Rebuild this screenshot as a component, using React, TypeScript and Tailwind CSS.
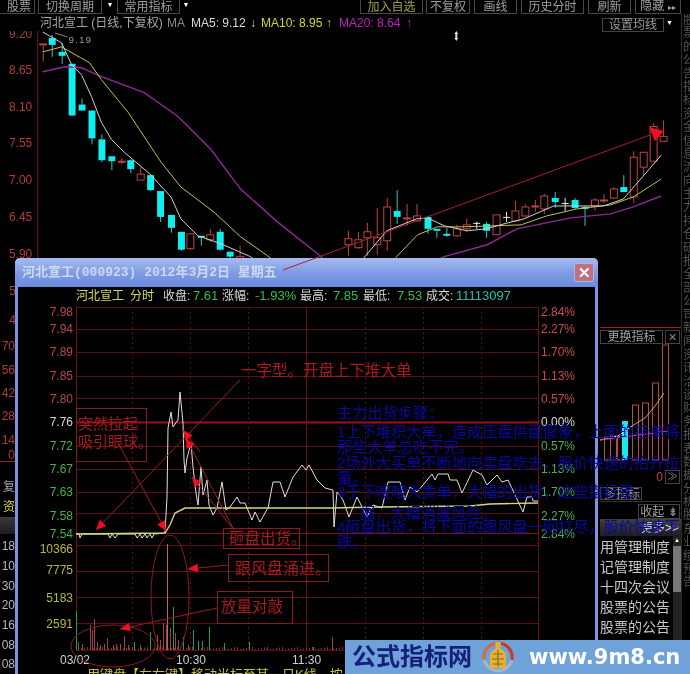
import React from "react";

type Kind = "up" | "down" | "white";
type Candle = [number, number, number, number, number, Kind];

const candles: Candle[] = [
  [41, 44, 45, 44, 62, "up"], [50, 38, 45, 35, 57, "down"], [60, 52, 56, 43, 64, "down"],
  [70, 64, 116, 64, 116, "down"], [80, 105, 111, 99, 111, "down"], [90, 111, 139, 111, 145, "down"],
  [100, 140, 161, 135, 163, "down"], [110, 157, 162, 157, 171, "down"], [120, 162, 163, 159, 165, "up"],
  [129, 161, 170, 160, 174, "down"], [139, 175, 181, 168, 181, "up"], [149, 176, 191, 175, 192, "down"],
  [159, 192, 218, 192, 223, "down"], [170, 216, 229, 216, 234, "down"], [180, 233, 251, 233, 252, "down"],
  [189, 235, 250, 235, 251, "up"], [200, 237, 239, 237, 247, "down"], [209, 236, 241, 230, 243, "up"],
  [219, 233, 251, 230, 252, "down"], [229, 253, 258, 253, 262, "down"], [239, 258, 262, 247, 268, "up"],
  [348, 240, 246, 232, 257, "up"], [358, 241, 249, 233, 250, "up"], [367, 233, 239, 224, 257, "up"],
  [377, 239, 246, 209, 256, "up"], [387, 208, 242, 199, 252, "up"], [397, 212, 218, 191, 225, "down"],
  [407, 219, 220, 205, 227, "up"], [417, 217, 222, 205, 223, "up"], [428, 218, 230, 217, 235, "down"],
  [437, 230, 232, 230, 239, "down"], [447, 235, 237, 229, 238, "down"], [457, 230, 237, 226, 238, "up"],
  [467, 226, 230, 220, 233, "up"], [477, 224, 225, 223, 230, "white"], [487, 225, 232, 223, 239, "down"],
  [497, 216, 236, 216, 236, "up"], [507, 218, 219, 213, 223, "white"], [516, 212, 222, 202, 223, "up"],
  [526, 208, 217, 205, 218, "up"], [536, 207, 208, 201, 213, "up"], [545, 197, 210, 195, 215, "up"],
  [556, 199, 203, 193, 209, "down"], [566, 204, 205, 199, 212, "white"], [576, 201, 209, 199, 210, "down"],
  [586, 208, 210, 207, 227, "down"], [596, 201, 207, 199, 212, "up"], [605, 201, 202, 195, 204, "up"],
  [615, 190, 199, 188, 200, "up"], [625, 188, 193, 176, 193, "down"], [635, 158, 198, 152, 204, "up"],
  [645, 153, 168, 153, 176, "up"], [655, 127, 162, 124, 162, "up"], [665, 137, 142, 121, 142, "up"],
];

const ma5 = "41,32 60,43 70,65 80,75 90,97 100,123 110,140 123,153 149,175 170,198 180,220 197,237 220,245 250,258 280,285 340,290 365,258 387,232 417,220 428,219 445,227 468,232 487,230 505,225 525,220 555,207 578,207 605,207 625,200 645,177 663,156";
const ma10 = "41,52 60,47 88,63 100,80 127,113 160,163 180,188 213,213 240,238 267,257 320,300 370,300 397,258 418,236 438,228 462,228 495,227 522,226 548,217 578,210 612,206 635,198 663,180";
const ma20 = "41,72 63,67 80,68 100,77 143,93 177,117 210,150 240,190 277,223 320,257 360,300 420,270 445,258 488,246 518,230 572,219 612,215 635,208 663,197";

const priceLine =
  "76,534 79,534 80,538 82,534 108,534 110,538 112,534 115,538 118,534 135,534 137,538 140,534 142,538 145,534 147,538 150,534 152,538 154,534 165,533 167,497 168,428 171,412 173,427 178,420 180,392 183,423 184,460 185,473 187,458 191,443 193,467 196,493 198,505 201,467 203,495 207,480 209,505 213,515 217,508 222,482 226,510 230,507 237,497 240,503 245,503 252,520 255,512 260,522 265,513 268,508 273,482 280,482 285,497 293,477 302,465 306,470 309,465 317,480 325,488 333,490 334,527 337,492 343,500 349,517 357,497 367,517 373,505 382,508 388,482 400,482 405,500 410,487 417,492 423,485 432,474 435,480 438,474 448,474 450,480 457,480 462,493 473,470 482,475 487,485 497,475 502,482 508,480 523,512 527,497 532,497 533,501 538,501";
const avgLine = "76,534 165,533 170,525 175,513 185,508 200,508 330,508 380,507 470,506 490,504 538,503";

const gridRows = [307, 329, 352, 376, 398, 446, 469, 492, 513, 545, 571, 597, 623];

const priceLabels: [string, number, string][] = [
  ["7.98", 312, "#b84848"], ["7.94", 329, "#b84848"], ["7.89", 352, "#b84848"], ["7.85", 376, "#b84848"],
  ["7.80", 399, "#b84848"], ["7.76", 422, "#d8d8d8"], ["7.72", 446, "#48b048"], ["7.67", 469, "#48b048"],
  ["7.63", 492, "#48b048"], ["7.58", 516, "#48b048"], ["7.54", 534, "#48b048"],
];
const pctLabels: [string, number, string][] = [
  ["2.84%", 312, "#c84c4c"], ["2.27%", 329, "#c84c4c"], ["1.70%", 352, "#c84c4c"], ["1.13%", 376, "#c84c4c"],
  ["0.57%", 399, "#c84c4c"], ["0.00%", 422, "#d8d8d8"], ["0.57%", 446, "#48b048"], ["1.13%", 469, "#48b048"],
  ["1.70%", 492, "#48b048"], ["2.27%", 516, "#48b048"], ["2.84%", 534, "#48b048"],
];
const volLabels: [string, number][] = [["10366", 549], ["7775", 570], ["5183", 598], ["2591", 624]];

const greenBars: [number, number][] = [
  [76, 611], [134, 642], [150, 632], [173, 607], [183, 637], [193, 630], [198, 641], [202, 641], [209, 627], [224, 643], [249, 642], [313, 647],
];
const redBars: [number, number][] = [
  [78, 642], [82, 644], [90, 625], [92, 630], [94, 619], [97, 642], [100, 645], [104, 644], [107, 638], [113, 645], [116, 644], [120, 644], [124, 636], [128, 645], [140, 645], [157, 635], [160, 640], [163, 623], [166, 625], [170, 628], [175, 633], [178, 640], [188, 645], [332, 637],
];
const lowBars = Array.from({ length: 150 }, (_, i) => 78 + i * 3);

const strip = "股票的公告指标资金信息流向主力持仓研报全部公司新闻资讯洽谈财务报表数据分析股东业绩预告".split("");

const leftLabels = ["70", "56", "42", "28", "14"];
const leftTimes = ["18", "10", "30", "20", "16", "08", "08"];
const news = ["用管理制度", "记管理制度", "十四次会议", "股票的公告", "股票的公告", "股票的公告"];

function Arrow({ x1, y1, x2, y2 }: { x1: number; y1: number; x2: number; y2: number }) {
  const a = Math.atan2(y2 - y1, x2 - x1);
  const len = 10;
  const w = 4.5;
  const bx = x2 - Math.cos(a) * len;
  const by = y2 - Math.sin(a) * len;
  const pts = `${x2},${y2} ${bx - Math.sin(a) * w},${by + Math.cos(a) * w} ${bx + Math.sin(a) * w},${by - Math.cos(a) * w}`;
  return (
    <g>
      <line x1={x1} y1={y1} x2={x2} y2={y2} stroke="#a01c20" strokeWidth="1" />
      <polygon points={pts} fill="#ee1020" />
    </g>
  );
}

function ToolButton({ label, className }: { label: React.ReactNode; className: string }) {
  return (
    <div className={`flex h-[14px] shrink-0 items-center justify-center border-x border-b border-[#484848] text-[12px] leading-[12px] ${className}`}>
      {label}
    </div>
  );
}

function MainChart() {
  return (
    <svg viewBox="0 31 681 298" className="block h-[298px] w-[681px]">
      <line x1="36" y1="31" x2="36" y2="329" stroke="#7a1a1a" />
      {[["9.20", 38], ["8.65", 74], ["8.10", 111], ["7.55", 148], ["7.00", 185], ["6.45", 222], ["5.90", 259]].map(([t, y]) => (
        <text key={t} x="7" y={y} fontSize="12" fill="#b03c3c">{t}</text>
      ))}
      <text x="14" y="297" fontSize="12" textAnchor="end" fill="#b03c3c">5</text>
      <text x="14" y="326" fontSize="12" textAnchor="end" fill="#b03c3c">4</text>
      <line x1="0" y1="329.5" x2="15" y2="329.5" stroke="#a01c20" />
      {candles.map(([x, top, bottom, wTop, wBottom, kind], i) => {
        const color = kind === "down" ? "#10eeee" : kind === "white" ? "#e8e8e8" : "#c04444";
        return (
          <g key={i}>
            <line x1={x + 0.5} y1={wTop} x2={x + 0.5} y2={wBottom} stroke={kind === "down" ? "#2fc8c8" : color} />
            <rect
              x={x - 3}
              y={top}
              width="7"
              height={Math.max(bottom - top, 1)}
              fill={kind === "up" ? "#000" : color}
              stroke={kind === "up" ? color : "none"}
            />
          </g>
        );
      })}
      <polyline points={ma20} fill="none" stroke="#8e2a96" strokeWidth="1.4" />
      <polyline points={ma10} fill="none" stroke="#c8c050" strokeWidth="1" />
      <polyline points={ma5} fill="none" stroke="#d0d0d0" strokeWidth="1" />
      <line x1="53" y1="33" x2="66" y2="37" stroke="#888" />
      <text x="67" y="43" fontSize="10" letterSpacing="1" fill="#999">9.19</text>
      <path d="M457 31 l2 3 h-4 z M457 41 l2 -3 h-4 z M456 34 h2 v4 h-2 z" fill="#ddd" />
    </svg>
  );
}

function IndicatorChart() {
  const bars: [number, number][] = [[607, 439], [613, 438], [620, 438], [635, 407], [645, 405], [655, 385], [665, 347]];
  return (
    <svg viewBox="600 346 81 117" className="block h-[117px] w-[81px]">
      {bars.map(([x, y]) => (
        <rect key={x} x={x - 2.5} y={y} width="6" height={462 - y} fill="none" stroke="#b84a44" />
      ))}
      <rect x="622" y="423" width="6" height="39" fill="#18e8f0" />
      <polyline points="600,442 618,438 632,428" fill="none" stroke="#e8d8d0" />
      <polyline points="632,428 645,420 655,408 664,395" fill="none" stroke="#d8a030" />
      <polyline points="600,442 630,438 668,433" fill="none" stroke="#c83ca0" />
    </svg>
  );
}

function IntradayChart() {
  return (
    <svg viewBox="18 305 577 369" className="block h-[369px] w-[577px]">
      {gridRows.map((y) => (
        <line key={y} x1="76" y1={y + 0.5} x2="538" y2={y + 0.5} stroke="#5c0f14" />
      ))}
      <line x1="76" y1="422.5" x2="538" y2="422.5" stroke="#a01018" strokeWidth="2" />
      <line x1="76" y1="533.5" x2="538" y2="533.5" stroke="#7a1418" />
      {[132, 190, 248, 365, 423, 481].map((x) => (
        <line key={x} x1={x + 0.5} y1="307" x2={x + 0.5} y2="650" stroke="#5c0f14" strokeDasharray="2 3" />
      ))}
      {[76, 306, 538].map((x) => (
        <line key={x} x1={x + 0.5} y1="307" x2={x + 0.5} y2="650" stroke="#6a1116" />
      ))}

      {priceLabels.map(([t, y, c]) => (
        <text key={t} x="73" y={y + 4} fontSize="12" textAnchor="end" fill={c}>{t}</text>
      ))}
      {pctLabels.map(([t, y, c], i) => (
        <text key={i} x="541" y={y + 4} fontSize="12" fill={c}>{t}</text>
      ))}
      {volLabels.map(([t, y]) => (
        <text key={t} x="73" y={y + 4} fontSize="12" textAnchor="end" fill="#b8b840">{t}</text>
      ))}

      {lowBars.map((x) => (
        <line key={x} x1={x + 0.5} y1={650 - (1 + ((x * 7) % 5) * 0.5)} x2={x + 0.5} y2="650" stroke="#8a2a2a" />
      ))}
      {redBars.map(([x, y]) => (
        <line key={x} x1={x + 0.5} y1={y} x2={x + 0.5} y2="650" stroke="#a04040" />
      ))}
      {greenBars.map(([x, y]) => (
        <line key={x} x1={x + 0.5} y1={y} x2={x + 0.5} y2="650" stroke="#20a040" />
      ))}
      <line x1="167.5" y1="544" x2="167.5" y2="650" stroke="#b06868" />
      <line x1="76" y1="650.5" x2="538" y2="650.5" stroke="#5c0f14" />

      <polyline points={priceLine} fill="none" stroke="#e0e0e0" />
      <polyline points={avgLine} fill="none" stroke="#d8d480" strokeWidth="1.4" />

      <text x="60" y="664" fontSize="12" fill="#d0d0d0">03/02</text>
      <text x="176" y="664" fontSize="12" fill="#d0d0d0">10:30</text>
      <text x="292" y="664" fontSize="12" fill="#d0d0d0">11:30</text>
      <text x="87" y="679" fontSize="13" fill="#c8c040">用键盘【左右键】移动光标至某一日K线，按</text>

      <g fill="none" stroke="#8e1a1e">
        <rect x="76.5" y="408.5" width="70" height="53" />
        <rect x="223.5" y="528.5" width="76" height="20" />
        <rect x="228.5" y="554.5" width="100" height="27" />
        <rect x="217.5" y="591.5" width="75" height="32" />
        <ellipse cx="170" cy="597" rx="19" ry="62" />
        <ellipse cx="113" cy="646" rx="42" ry="21" />
      </g>
      <Arrow x1={240} y1={380} x2={96} y2={530} />
      <Arrow x1={118} y1={443} x2={166} y2={531} />
      <Arrow x1={200} y1={452} x2={183} y2={430} />
      <Arrow x1={234} y1={530} x2={192} y2={477} />
      <Arrow x1={234} y1={530} x2={186} y2={438} />
      <Arrow x1={228} y1={565} x2={188} y2={569} />
      <Arrow x1={217} y1={608} x2={120} y2={629} />

      <g fill="#a81a1c" fontSize="15">
        <text x="241" y="376" fontSize="15.5">一字型。开盘上下堆大单</text>
        <text x="78" y="429">突然拉起</text>
        <text x="78" y="447">吸引眼球。</text>
        <text x="229" y="544" fontSize="15.5">砸盘出货。</text>
        <text x="235" y="574" fontSize="16">跟风盘涌进。</text>
        <text x="221" y="612" fontSize="15.5">放量对敲</text>
      </g>
    </svg>
  );
}

function Overlay() {
  const lines: [string, number, number][] = [
    ["主力出货步骤：", 337, 418],
    ["1上下堆积大单，造成压盘供盘假象，上面的挂单将", 337, 437],
    ["那些大单总吃不完。", 337, 452],
    ["2场外大买单不断地向卖盘吃去，股价快速的抬升拉", 337, 468],
    ["量。", 337, 483],
    ["3于下嗖嗖大卖单，大幅的出货，这些指标是", 337, 497],
    ["据，大幅消减风险。", 360, 518],
    ["4砸盘出货，将下面的跟风盘一网打尽，股价快速下", 337, 532],
    ["跌。", 337, 547],
  ];
  return (
    <svg viewBox="0 0 690 674" className="pointer-events-none absolute inset-0 h-[674px] w-[690px]">
      <line x1="283" y1="270" x2="650" y2="135" stroke="#a82030" />
      <polygon points="664,131 649,127 655,141" fill="#ee1020" />
      {lines.map(([t, x, y], i) => (
        <text key={i} x={x} y={y} fontSize="15.2" fill="#0808a4">{t}</text>
      ))}
    </svg>
  );
}

function Logo() {
  return (
    <svg viewBox="0 0 36 34" className="h-[34px] w-[36px] shrink-0">
      <path d="M4 20 A14.5 14.5 0 0 1 18 3" fill="none" stroke="#d06a48" strokeWidth="3" />
      <path d="M18 3 A14.5 14.5 0 0 1 32 20" fill="none" stroke="#c23c2a" strokeWidth="3" />
      <path d="M4 20 A14.5 14.5 0 0 0 32 20" fill="none" stroke="#a8b4c4" strokeWidth="3" />
      <path d="M15 2 h6 l-1 6 l6 5 v15 h-16 v-15 l6 -5 z" fill="#e2b236" />
      <path d="M13 14 h10 M12 19 h12 M13 24 h10 M18 10 v17" stroke="#8a6a18" strokeWidth="1.2" />
    </svg>
  );
}

export default function App() {
  return (
    <div className="relative flex h-[674px] w-[690px] overflow-hidden bg-black font-['Liberation_Sans','Noto_Sans_CJK_SC',sans-serif] blur-[0.4px]">
      <div className="flex w-[681px] shrink-0 flex-col">
        {/* top toolbar */}
        <div className="flex h-[14px] text-[#a0a0a0]">
          <ToolButton label="股票" className="w-[35px] justify-end border-l-0 pr-[3px]" />
          <ToolButton label="切换周期" className="ml-[3px] w-[64px]" />
          <span className="ml-[3px] mt-[1px] w-[10px] text-center text-[7px] leading-[8px] text-white">▼</span>
          <ToolButton label="常用指标" className="ml-[2px] w-[63px]" />
          <span className="ml-[1px] mt-[1px] w-[10px] text-center text-[7px] leading-[8px] text-white">▼</span>
          <ToolButton label="加入自选" className="ml-[169px] w-[63px] text-[#a8a040]" />
          <ToolButton label="不复权" className="ml-[3px] w-[44px]" />
          <ToolButton label="画线" className="ml-[4px] w-[43px]" />
          <ToolButton label="历史分时" className="ml-[4px] w-[63px]" />
          <ToolButton label="刷新" className="ml-[4px] w-[43px]" />
          <ToolButton
            label={<span>隐藏 <span className="text-[8px]">▸▸</span></span>}
            className="ml-[4px] w-[46px]"
          />
        </div>

        {/* title row of the day chart */}
        <div className="flex h-[17px] items-center whitespace-nowrap pl-[40px] text-[12px] leading-[14px]">
          <span className="w-[127px] text-[#a8a8a8]">河北宣工 (日线,下复权)</span>
          <span className="w-[24px] text-[#888]">MA</span>
          <span className="w-[59px] text-[#d8d8d8]">MA5: 9.12</span>
          <span className="w-[11px] text-[#d8d8d8]">↓</span>
          <span className="w-[65px] text-[#d8d820]">MA10: 8.95</span>
          <span className="w-[13px] text-[#d8d820]">↑</span>
          <span className="w-[67px] text-[#c020c0]">MA20: 8.64</span>
          <span className="w-[196px] text-[#c020c0]">↑</span>
          <div className="mt-[4px] flex h-[14px] w-[62px] shrink-0 items-center justify-center border border-[#444] text-[#9a9a9a]">设置均线</div>
          <span className="ml-[2px] text-[7px] text-white">▼</span>
        </div>

        <MainChart />

        <div className="flex flex-1 justify-between">
          {/* left edge of the panel behind the dialog */}
          <div className="flex w-[15px] flex-col items-end overflow-hidden text-[12px] text-[#b03c3c]">
            <div className="mt-[8px] flex flex-col items-end">
              {leftLabels.map((t) => (
                <span key={t} className="h-[23.4px] shrink-0 leading-[23px]">{t}</span>
              ))}
              <span className="-mt-[3px] shrink-0 leading-[12px]">0</span>
            </div>
            <div className="h-px w-full shrink-0 bg-[#a01c20]" />
            <div className="mt-[18px] whitespace-nowrap leading-[14px] text-[#a0a0a0]">复</div>
            <div className="mt-[6px] whitespace-nowrap leading-[14px] text-[#d8d840]">资</div>
            <div className="mt-[3px] h-[17px] w-full shrink-0 bg-gradient-to-b from-[#3a3a3a] to-[#1c1c1c]" />
            <div className="mt-[2px] flex flex-col items-end text-[#b8b8b8]">
              {leftTimes.map((t, i) => (
                <span key={i} className="h-[19.7px] shrink-0 leading-[20px]">{t}</span>
              ))}
            </div>
          </div>

          {/* right panel */}
          <div className="flex w-[81px] flex-col overflow-hidden">
            <div className="h-px w-full bg-[#a01c20]" />
            <div className="mt-[2px] flex h-[14px] gap-[2px] text-[12px] text-[#a0a0a0]">
              <div className="flex w-[63px] items-center justify-center border border-[#444]">更换指标</div>
              <div className="flex w-[15px] items-center justify-center border border-[#444] text-[11px] text-[#888]">✕</div>
            </div>
            <IndicatorChart />
            <div className="mt-[8px] flex h-[15px] items-center justify-end text-[12px]">
              <span className="mr-[2px] text-[#c84030]">0</span>
              <span className="mr-[1px] flex h-[14px] w-[15px] items-center justify-center border border-[#444] text-[10px] text-[#888]">≫</span>
            </div>
            <div className="mt-[3px] flex h-[13px] w-[42px] items-center justify-end border border-[#444] pr-[1px] text-[12px] text-[#a0a0a0]">多指标</div>
            <div className="mt-[1px] h-px w-full bg-[#333]" />
            <div className="mt-[2px] flex justify-end">
              <div className="mr-[1px] flex h-[15px] w-[42px] items-center justify-center border border-[#444] text-[12px] text-[#a0a0a0]">收起 ⇟</div>
            </div>
            <div className="flex h-[17px] items-center justify-end bg-gradient-to-b from-[#404040] to-[#1e1e1e] pr-[2px] text-[12px] text-[#d8d8e8]">更多&gt;&gt;</div>
            <div className="flex flex-1">
              <div className="flex w-[73px] flex-col overflow-hidden whitespace-nowrap pt-[1px] text-[14px] text-[#c8c8c8]">
                {news.map((t, i) => (
                  <span key={i} className="h-[20px] leading-[20px]">{t}</span>
                ))}
              </div>
              <div className="flex w-[8px] flex-col bg-[#222]">
                <span className="h-[8px] text-center text-[6px] leading-[8px] text-white">▲</span>
                <div className="mt-[2px] h-[46px] bg-[#777]" />
              </div>
            </div>
          </div>
        </div>
      </div>

      {/* right edge of the window, mostly cut off */}
      <div className="mt-[14px] flex w-[9px] flex-col overflow-hidden border-l border-[#2c2c2c] pl-[1px] text-[12px] leading-[13px] text-[#555]">
        {strip.map((c, i) => (
          <span key={i} className="h-[13.4px] shrink-0">{c}</span>
        ))}
      </div>

      {/* dialog */}
      <div className="absolute left-[15px] top-[258px] flex h-[420px] w-[583px] flex-col rounded-t-[5px] bg-[#7d93e0] px-[3px]">
        <div className="-mx-[3px] flex h-[29px] shrink-0 items-center justify-between rounded-t-[5px] bg-gradient-to-b from-[#a6bcf0] via-[#7f9ce4] to-[#6a8ade] pl-[7px] pr-[4px]">
          <span className="whitespace-pre font-['Liberation_Mono','Noto_Sans_CJK_SC',monospace] text-[13px] font-bold text-[#cfd8ee]">河北宣工(000923) 2012年3月2日 星期五</span>
          <span className="flex h-[19px] w-[20px] items-center justify-center rounded-[2px] border border-[#a8b8e0] bg-[#c0707e] text-[15px] font-bold leading-none text-white">✕</span>
        </div>
        <div className="flex-1 bg-black">
          <div className="flex h-[18px] items-center whitespace-nowrap pl-[58px] text-[12px] text-[#d8d8d8]">
            <span className="w-[54px] text-[#d8d860]">河北宣工</span>
            <span className="w-[33px] text-[#d8d860]">分时</span>
            <span className="w-[30px]">收盘:</span>
            <span className="w-[29px] text-[13px] text-[#30c040]">7.61</span>
            <span className="w-[33px]">涨幅:</span>
            <span className="w-[45px] text-[13px] text-[#30c040]">-1.93%</span>
            <span className="w-[33px]">最高:</span>
            <span className="w-[30px] text-[13px] text-[#30c040]">7.85</span>
            <span className="w-[34px]">最低:</span>
            <span className="w-[29px] text-[13px] text-[#30c040]">7.53</span>
            <span className="w-[30px]">成交:</span>
            <span className="text-[13px] text-[#20c0b0]">11113097</span>
          </div>
          <IntradayChart />
        </div>
      </div>

      <Overlay />

      {/* watermark strip */}
      <div className="absolute left-[345px] top-[640px] flex h-[34px] w-[345px] items-center bg-[#6fa2d8]">
        <span className="ml-[7px] w-[128px] text-[24px] font-bold leading-[34px] text-[#14207c]">公式指标网</span>
        <Logo />
        <span className="ml-[13px] whitespace-nowrap font-['DejaVu_Sans',sans-serif] text-[21px] font-bold leading-[34px] text-white">www.9m8.cn</span>
      </div>
    </div>
  );
}
